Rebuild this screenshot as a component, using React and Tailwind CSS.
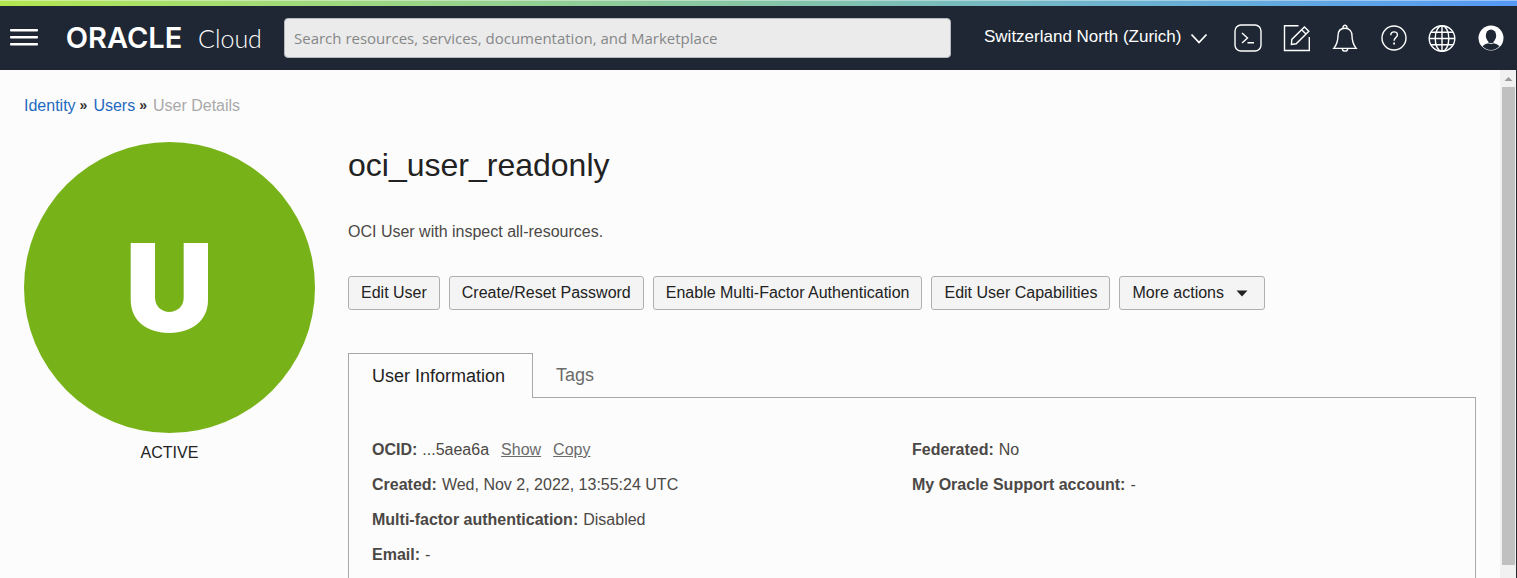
import React from "react";

const iconProps = {
  width: 28,
  height: 28,
  viewBox: "0 0 28 28",
  fill: "none",
  stroke: "currentColor",
  strokeWidth: 1.4,
  "aria-hidden": true,
};

function TerminalIcon() {
  return (
    <svg {...iconProps}>
      <rect x="1" y="1" width="26" height="26" rx="6" />
      <path d="M8 9l5.500 5L8 19M13.500 18.800h6.500" />
    </svg>
  );
}

function EditIcon() {
  return (
    <svg {...iconProps}>
      <path d="M15.500 1.800H1.500v24.700h24.800V13" />
      <path d="M8.400 20.400l.4-5L21.400 3l4.400 4.200L13.200 19.800z" />
      <path d="M18.600 5.800l4.400 4.200" />
    </svg>
  );
}

function BellIcon() {
  return (
    <svg {...iconProps}>
      <path d="M14 4.200c-4.600 0-7 3.200-7 7.600 0 5.400-1 8.600-4.200 12.600h22.400c-3.200-4-4.200-7.200-4.200-12.600 0-4.400-2.400-7.600-7-7.600z" />
      <path d="M12.400 4.200a1.900 1.900 0 1 1 3.200 0M11.300 24.400a2.700 2.700 0 0 0 5.400 0" />
    </svg>
  );
}

function HelpIcon() {
  return (
    <svg {...iconProps}>
      <circle cx="14" cy="14" r="12" />
      <path d="M10.800 11.200c0-2 1.400-3.300 3.300-3.300s3.300 1.200 3.300 3c0 2.400-3.300 2.900-3.300 5.800" />
      <path d="M14.100 18.600v1.900" strokeWidth="1.800" />
    </svg>
  );
}

function GlobeIcon() {
  return (
    <svg {...iconProps}>
      <circle cx="14" cy="14.500" r="12.800" />
      <ellipse cx="14" cy="14.500" rx="6.800" ry="12.800" />
      <path d="M14 1.700v25.600M1.200 14.500h25.600M3 8.200h22M3 20.800h22" />
    </svg>
  );
}

function AvatarIcon() {
  return (
    <svg {...iconProps} stroke="none">
      <circle cx="14" cy="14" r="12.500" fill="#fff" />
      <ellipse cx="14" cy="11.800" rx="5.200" ry="6.300" fill="#1e2733" />
      <path
        d="M11.300 16v3.200c-2.200.5-4.300 1.400-5.800 3.100a11.800 11.800 0 0 0 17 0c-1.500-1.700-3.600-2.600-5.800-3.100V16z"
        fill="#1e2733"
      />
      <path d="M11 18.800c1.800 1 4.200 1 6 0" stroke="#fff" strokeWidth="0.800" fill="none" />
    </svg>
  );
}

const tools = [
  { label: "Cloud Shell", Icon: TerminalIcon },
  { label: "Feedback", Icon: EditIcon },
  { label: "Announcements", Icon: BellIcon },
  { label: "Help", Icon: HelpIcon },
  { label: "Language", Icon: GlobeIcon },
  { label: "Profile", Icon: AvatarIcon },
];

const actions = [
  "Edit User",
  "Create/Reset Password",
  "Enable Multi-Factor Authentication",
  "Edit User Capabilities",
];

function Header() {
  return (
    <header className="flex h-16 shrink-0 items-center bg-[#1e2733] pr-3 pl-[10px] text-white">
      <button type="button" aria-label="Open navigation menu" className="mr-5 shrink-0">
        <svg width="28" height="18" viewBox="0 0 28 18" fill="#fff" aria-hidden="true">
          <rect y="0" width="28" height="2.500" rx="1" />
          <rect y="7" width="28" height="2.500" rx="1" />
          <rect y="14" width="28" height="2.500" rx="1" />
        </svg>
      </button>
      <a href="#home" className="flex w-[226px] shrink-0 items-baseline gap-2 whitespace-nowrap">
        <span className="w-[132px] text-center font-['Inter',sans-serif] text-[29px] leading-8 font-semibold">ORACLE</span>
        <span className="font-['Lato',sans-serif] text-[25px] leading-8 font-light">Cloud</span>
      </a>
      <input
        type="search"
        aria-label="Search"
        placeholder="Search resources, services, documentation, and Marketplace"
        className="h-10 min-w-0 flex-1 rounded border border-[#b4b8bf] bg-[#ebebeb] px-[9px] font-['Open_Sans',sans-serif] text-[15px] text-[#333] placeholder:text-[#868788]"
      />
      <button type="button" className="mr-[26px] ml-[33px] flex w-[224px] shrink-0 items-center justify-between whitespace-nowrap">
        <span className="pb-[2px] text-[17px] leading-6">Switzerland North (Zurich)</span>
        <svg width="18" height="12" viewBox="0 0 18 12" fill="none" stroke="currentColor" strokeWidth="1.800" aria-hidden="true">
          <path d="M1.500 2.500L9 10.500l7.500-8" />
        </svg>
      </button>
      <nav aria-label="Tools" className="flex w-[271px] shrink-0 justify-between">
        {tools.map(({ label, Icon }) => (
          <button key={label} type="button" aria-label={label}>
            <Icon />
          </button>
        ))}
      </nav>
    </header>
  );
}

function Field({ label, children }) {
  return (
    <div className="flex gap-[5px] leading-[35px]">
      <dt className="font-bold">{label}:</dt>
      <dd>{children}</dd>
    </div>
  );
}

function Details() {
  return (
    <section>
      <div role="tablist" className="flex h-[45px] text-lg">
        <button
          type="button"
          role="tab"
          aria-selected="true"
          className="border-t border-r border-l border-[#a8a8a8] pr-[27px] pl-[23px] text-[#222]"
        >
          User Information
        </button>
        <div className="flex flex-1 border-b border-[#a8a8a8]">
          <button type="button" role="tab" aria-selected="false" className="px-[23px] text-[#6b6b6b]">
            Tags
          </button>
        </div>
      </div>
      <div role="tabpanel" className="grid grid-cols-2 border-r border-l border-[#a8a8a8] px-[23px] pt-[34px] pb-10">
        <dl>
          <Field label="OCID">
            ...5aea6a
            <button type="button" className="ml-3 text-[#6b6b6b] underline">Show</button>
            <button type="button" className="ml-3 text-[#6b6b6b] underline">Copy</button>
          </Field>
          <Field label="Created">Wed, Nov 2, 2022, 13:55:24 UTC</Field>
          <Field label="Multi-factor authentication">Disabled</Field>
          <Field label="Email">-</Field>
        </dl>
        <dl>
          <Field label="Federated">No</Field>
          <Field label="My Oracle Support account">-</Field>
        </dl>
      </div>
    </section>
  );
}

function Scrollbar() {
  return (
    <div aria-hidden="true" className="flex w-[17px] shrink-0 flex-col items-center border-r border-[#26282b] bg-[#f1f1f1] pb-[13px]">
      <svg width="16" height="17" viewBox="0 0 16 17" className="shrink-0">
        <path d="M4.500 11L8.500 7l4 4z" fill="#9a9a9a" />
      </svg>
      <div className="w-[13px] flex-1 bg-[#c0c0c0]" />
    </div>
  );
}

export default function App() {
  return (
    <div className="flex h-screen flex-col overflow-hidden bg-[#fcfcfc] font-['Liberation_Sans',Arial,sans-serif] text-base text-[#4b4845]">
      <div className="h-[6px] shrink-0 border-t border-white/40 bg-linear-to-r from-[#b2e64e] via-[#86c5a6] to-[#5599f5]" />
      <Header />
      <div className="flex min-h-0 flex-1">
        <main className="min-w-0 flex-1 overflow-hidden px-6 pt-6">
          <nav aria-label="Breadcrumb" className="flex gap-1 leading-6">
            <a href="#identity" className="text-[#1f69c0]">Identity</a>
            <span className="mr-[2px] text-sm leading-[22px] font-bold text-[#333]">»</span>
            <a href="#users" className="text-[#1f69c0]">Users</a>
            <span className="mr-[2px] text-sm leading-[22px] font-bold text-[#333]">»</span>
            <span className="text-[#a9a9a9]">User Details</span>
          </nav>
          <div className="mt-6 flex gap-[33px]">
            <aside className="w-[291px] shrink-0 text-center text-[#222]">
              <div className="flex aspect-square items-center justify-center rounded-full bg-[#78b219] font-['Inter',sans-serif] text-[123px] leading-none font-black text-white">
                U
              </div>
              <p className="mt-2 leading-6">ACTIVE</p>
            </aside>
            <div className="min-w-0 flex-1">
              <h1 className="mt-[3px] text-[32px] leading-10 text-[#222]">oci_user_readonly</h1>
              <p className="mt-[35px] leading-6">OCI User with inspect all-resources.</p>
              <div className="mt-8 mb-[43px] flex flex-wrap gap-[9px] text-[#222]">
                {actions.map((action) => (
                  <button
                    key={action}
                    type="button"
                    className="h-[34px] rounded-[3px] border border-[#adafb2] bg-[#f4f4f4] px-3"
                  >
                    {action}
                  </button>
                ))}
                <button
                  type="button"
                  className="flex h-[34px] items-center gap-3 rounded-[3px] border border-[#adafb2] bg-[#f4f4f4] pr-4 pl-3"
                >
                  More actions
                  <svg width="12" height="7" viewBox="0 0 12 7" fill="#222" aria-hidden="true">
                    <path d="M.5.500h11L6 6.500z" />
                  </svg>
                </button>
              </div>
              <Details />
            </div>
          </div>
        </main>
        <Scrollbar />
      </div>
    </div>
  );
}
